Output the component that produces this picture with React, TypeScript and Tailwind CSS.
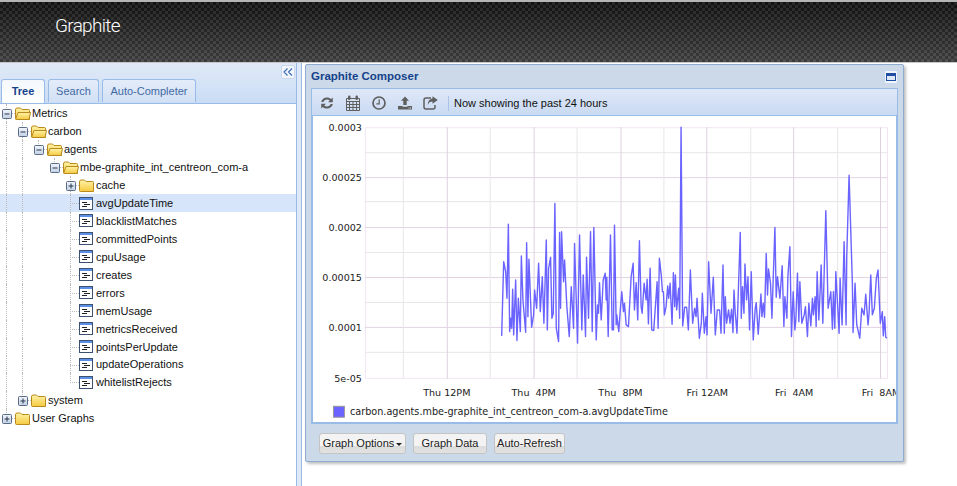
import { FC } from "react";

// traced from the chart, in page pixels: x = ox + a / 3, y = 200 + b / 3
const left = [[36,408],[42,185],[48,215],[52,295],[56,72],[60,395],[63,355],[66,385],[69,268],[72,405],[78,240],[82,422],[86,295],[92,395],[95,168],[100,300],[108,397],[111,128],[115,350],[118,178],[126,382],[132,345],[135,270],[141,325],[147,190],[152,335],[158,230],[163,370],[170,120],[173,390],[177,205],[183,172],[187,355],[191,340],[196,10],[200,385],[207,425],[210,97],[213,325],[216,95],[222,245],[225,180],[232,320],[239,410],[245,260],[252,385],[255,130],[264,430],[270,105],[277,390],[281,225],[288,410],[291,172],[297,355],[303,95],[308,395],[313,82],[320,420],[324,315],[327,340],[330,248],[335,360],[341,240],[347,220],[350,300],[352,232],[356,410],[363,105],[368,390],[372,390],[375,75],[380,375],[382,345],[388,395],[392,335],[397,275],[402,335],[405,310],[410,375],[417,380],[425,230],[431,190],[435,330],[440,248],[445,360],[450,122],[455,320],[458,340],[464,250],[470,300],[473,238],[477,372],[482,205],[487,390],[493,392],[503,245],[506,385],[510,175],[516,230],[519,275],[522,275],[525,345],[530,320],[535,258],[538,295],[542,250],[548,373],[552,218],[556,320],[558,225],[562,330],[568,265],[571,355],[575,-219],[580,378],[586,322],[592,322],[597,390]];
const right = [[3,210],[10,370],[16,325],[20,350],[23,295],[30,415],[36,370],[39,280],[45,400],[50,350],[53,405],[58,185],[65,340],[72,232],[78,405],[84,330],[91,330],[95,400],[101,195],[105,400],[108,290],[112,370],[118,330],[122,370],[127,328],[131,398],[134,270],[138,340],[143,400],[153,97],[156,355],[160,260],[164,340],[167,192],[172,300],[176,230],[181,390],[186,215],[192,420],[198,325],[201,308],[207,403],[215,282],[218,350],[222,310],[226,352],[231,160],[235,285],[238,207],[244,250],[248,355],[257,82],[261,292],[265,230],[272,295],[279,197],[284,380],[287,290],[293,355],[296,230],[302,140],[307,410],[312,275],[317,390],[320,360],[325,220],[329,365],[332,245],[338,370],[345,345],[349,320],[355,410],[359,310],[365,378],[370,295],[373,345],[378,290],[381,380],[384,215],[389,360],[392,295],[396,195],[401,370],[410,32],[417,325],[425,275],[430,388],[433,275],[437,385],[440,215],[450,400],[453,235],[459,375],[465,125],[471,375],[473,165],[480,-75],[490,250],[492,398],[498,250],[503,375],[512,415],[518,325],[525,345],[530,283],[537,375],[540,340],[545,225],[550,345],[556,325],[562,235],[567,210],[574,370],[580,335],[583,408],[587,350],[590,412],[594,415]];

const linePoints = [
  ...left.map(([a, b]) => `${(490 + a / 3).toFixed(1)},${(200 + b / 3).toFixed(1)}`),
  ...right.map(([a, b]) => `${(690 + a / 3).toFixed(1)},${(200 + b / 3).toFixed(1)}`),
].join(" ");

const verticals = [403.5, 447.5, 490.5, 534.5, 577.5, 621.5, 664.5, 707.5, 751.5, 794.5, 838.5, 881.5];
const majorVerticals = [447.5, 534.5, 621.5, 707.5, 794.5, 881.5];
const horizontals = [152.5, 177.5, 201.5, 227.5, 252.5, 277.5, 302.5, 327.5, 352.5];
const majorHorizontals = [177.5, 227.5, 277.5, 327.5];
const yLabels: [string, number][] = [["0.0003", 131], ["0.00025", 181], ["0.0002", 231], ["0.00015", 281], ["0.0001", 331], ["5e-05", 382]];
const xLabels: [string, number][] = [["Thu 12PM", 447], ["Thu  4PM", 534], ["Thu  8PM", 621], ["Fri 12AM", 708], ["Fri  4AM", 795], ["Fri  8AM", 882]];

interface TreeRow {
  label: string;
  depth: number;
  guides: number[];
  icon: "open" | "closed" | "leaf";
  selected?: boolean;
  last?: boolean;
}

const leaf = (label: string, selected?: boolean, last?: boolean): TreeRow => ({ label, depth: 4, guides: [0, 1], icon: "leaf", selected, last });

const rows: TreeRow[] = [
  { label: "Metrics", depth: 0, guides: [], icon: "open" },
  { label: "carbon", depth: 1, guides: [0], icon: "open" },
  { label: "agents", depth: 2, guides: [0, 1], icon: "open", last: true },
  { label: "mbe-graphite_int_centreon_com-a", depth: 3, guides: [0, 1], icon: "open", last: true },
  { label: "cache", depth: 4, guides: [0, 1], icon: "closed" },
  leaf("avgUpdateTime", true),
  leaf("blacklistMatches"),
  leaf("committedPoints"),
  leaf("cpuUsage"),
  leaf("creates"),
  leaf("errors"),
  leaf("memUsage"),
  leaf("metricsReceived"),
  leaf("pointsPerUpdate"),
  leaf("updateOperations"),
  leaf("whitelistRejects", false, true),
  { label: "system", depth: 1, guides: [0], icon: "closed", last: true },
  { label: "User Graphs", depth: 0, guides: [], icon: "closed", last: true },
];

const Folder: FC<{ open: boolean }> = ({ open }) => (
  <svg width="16" height="14" viewBox="0 0 16 14" className="-ml-[1px] mt-[1px] shrink-0">
    <path d="M0.5 3 Q0.5 1 2 1 H5.5 L7 2.5 H13.5 Q14.5 2.5 14.5 3.5 V12.5 H1.5 Q0.5 12.5 0.5 11.5 Z" fill="url(#folderFill)" stroke="#b98a1e" />
    {open && <path d="M0.7 12 L3 5.5 H15.5 L14 12.5 H1.5 Z" fill="url(#folderFill)" stroke="#b98a1e" />}
  </svg>
);

const LeafIcon = () => (
  <svg width="16" height="14" viewBox="0 0 16 14" className="-ml-[1px] mt-[1px] shrink-0">
    <rect x="0.5" y="0.5" width="13" height="12" fill="#fff" stroke="#3f5170" />
    <rect x="1" y="1" width="12" height="2" fill="#5c8fe6" />
    <path d="M3 5.5 H8 M5 7.5 H11 M3 9.5 H8" stroke="#222" />
  </svg>
);

const Expander: FC<{ open: boolean }> = ({ open }) => (
  <svg width="10" height="10" viewBox="0 0 10 10" className="absolute left-[2px] top-[5px]">
    <rect x="0.5" y="0.5" width="9" height="9" rx="1" fill="url(#boxFill)" stroke="#5a6b85" />
    <path d={open ? "M2.5 5 H7.5" : "M2.5 5 H7.5 M5 2.5 V7.5"} stroke="#26364f" />
  </svg>
);

const Row: FC<{ row: TreeRow }> = ({ row }) => {
  const isLeaf = row.icon === "leaf";
  return (
    <div className={`flex h-[17.94px] items-center ${row.selected ? "bg-[#d6e5fa]" : ""}`}>
      {Array.from({ length: row.depth }).map((_, i) => (
        <div key={i} className="h-full w-4 shrink-0 pl-[6px]">
          {row.guides.includes(i) && <div className="h-full border-l border-dotted border-[#bbb]" />}
        </div>
      ))}
      <div className="relative h-full w-4 shrink-0 pl-[6px]">
        <div className={`border-l border-dotted border-[#bbb] ${row.last ? "h-[10px]" : "h-full"}`} />
        <div className="absolute left-[6px] top-[9px] w-[9px] border-t border-dotted border-[#bbb]" />
        {!isLeaf && <Expander open={row.icon === "open"} />}
      </div>
      {isLeaf ? <LeafIcon /> : <Folder open={row.icon === "open"} />}
      <span className="ml-[1px] mt-[1px] whitespace-nowrap text-[11px] leading-none text-[#111]">{row.label}</span>
    </div>
  );
};

const Tab: FC<{ label: string; active?: boolean; width: string }> = ({ label, active, width }) => (
  <div
    className={`flex items-center justify-center rounded-t-[3px] border border-[#99bbe8] text-[11px] ${width} ${
      active
        ? "h-[24px] border-b-0 bg-[linear-gradient(to_bottom,#f4f8fd,#fff)] font-bold text-[#15428b]"
        : "h-[23px] border-b-0 bg-[linear-gradient(to_bottom,#e3ecf9,#d3e1f5)] text-[#416aa3]"
    }`}
  >
    {label}
  </div>
);

const RefreshIcon = () => (
  <svg width="14" height="14" viewBox="0 0 14 14" fill="#5f5f5f">
    <path d="M1.2 6 C1.8 3.2 4 1.4 7 1.4 C8.7 1.4 10.1 2 11.2 3.1 L12.8 1.5 V6.2 H8.1 L9.7 4.6 C8.9 3.9 8 3.5 7 3.5 C5.3 3.5 3.9 4.5 3.4 6 Z" />
    <path d="M12.8 8 C12.2 10.8 10 12.6 7 12.6 C5.3 12.6 3.9 12 2.8 10.9 L1.2 12.5 V7.8 H5.9 L4.3 9.4 C5.1 10.1 6 10.5 7 10.5 C8.7 10.5 10.1 9.5 10.6 8 Z" />
  </svg>
);

const CalendarIcon = () => (
  <svg width="16" height="16" viewBox="0 0 16 16" fill="none" stroke="#5f5f5f">
    <path d="M1.5 3.5 H14.5 V15.5 H1.5 Z M1.5 6.5 H14.5 M1.5 9.5 H14.5 M1.5 12.5 H14.5 M4.5 6.5 V15.5 M8 6.5 V15.5 M11.5 6.5 V15.5" />
    <rect x="3" y="0.5" width="2.5" height="4.5" rx="1.2" fill="#5f5f5f" stroke="none" />
    <rect x="10.5" y="0.5" width="2.5" height="4.5" rx="1.2" fill="#5f5f5f" stroke="none" />
  </svg>
);

const ClockIcon = () => (
  <svg width="14" height="14" viewBox="0 0 14 14" fill="none" stroke="#5f5f5f">
    <circle cx="7" cy="7" r="6" strokeWidth="1.7" />
    <path d="M7.2 3.2 V7.8 H4.4" strokeWidth="1.2" />
  </svg>
);

const UploadIcon = () => (
  <svg width="14" height="14" viewBox="0 0 14 14" fill="#5f5f5f">
    <path d="M7 0.5 L11 4.8 H8.7 V9 H5.3 V4.8 H3 Z" />
    <path d="M0 10 H4.5 V10.8 H9.5 V10 H14 V13.5 H0 Z" />
    <rect x="10.5" y="11.5" width="1" height="1" fill="#ddd" />
    <rect x="12" y="11.5" width="1" height="1" fill="#ddd" />
  </svg>
);

const ShareIcon = () => (
  <svg width="15" height="14" viewBox="0 0 15 14">
    <path d="M8 2 H3 Q1 2 1 4 V11 Q1 13 3 13 H10 Q12 13 12 11 V9" fill="none" stroke="#5f5f5f" strokeWidth="1.5" />
    <path d="M9.5 0.2 L14.8 4 L9.5 7.8 V5.5 C7.2 5.5 5.6 6.6 4.8 9 C4.8 5.5 6.4 2.8 9.5 2.5 Z" fill="#5f5f5f" />
  </svg>
);

const ComposerButton: FC<{ label: string; width: string; caret?: boolean }> = ({ label, width, caret }) => (
  <button className={`flex h-[21px] items-center justify-center gap-[2px] rounded-[3px] border border-[#c4c4c4] bg-[linear-gradient(to_bottom,#f3f3f3_0,#f3f3f3_62%,#dcdcdc_62%,#e2e2e2_100%)] text-[11px] text-[#222] ${width}`}>
    {label}
    {caret && <span className="mt-[1px] h-0 w-0 border-x-[3px] border-t-[3px] border-x-transparent border-t-[#222]" />}
  </button>
);

const Chart = () => (
  <svg viewBox="313 116 584 306" className="block h-[306px] w-[584px]" fontFamily="'DejaVu Sans', sans-serif" fontSize="9.6" fill="#222">
    <rect x="365.5" y="127.5" width="523" height="251" fill="none" stroke="#f3e6f3" />
    {horizontals.map((y) => (
      <line key={y} x1="365" x2="889" y1={y} y2={y} stroke={majorHorizontals.includes(y) ? "#e3d3e3" : "#e9e6e9"} />
    ))}
    {verticals.map((x) => (
      <line key={x} x1={x} x2={x} y1="127" y2="379" stroke={majorVerticals.includes(x) ? "#e0cfe0" : "#e9e6e9"} />
    ))}
    <polyline points={linePoints} fill="none" stroke="#6a63ff" strokeWidth="1.4" strokeLinejoin="round" />
    {yLabels.map(([t, y]) => (
      <text key={t} x="362" y={y} textAnchor="end">{t}</text>
    ))}
    {xLabels.map(([t, x]) => (
      <text key={t} x={x} y="396" textAnchor="middle" xmlSpace="preserve">{t}</text>
    ))}
    <rect x="333.5" y="406.5" width="11" height="11" fill="#6a63ff" stroke="#999" />
    <text x="350" y="415" fontSize="9.7">carbon.agents.mbe-graphite_int_centreon_com-a.avgUpdateTime</text>
  </svg>
);

const App = () => {
  return (
    <div className="flex h-[486px] w-[957px] flex-col overflow-hidden bg-white font-['Liberation_Sans',Arial,sans-serif]">
      <svg className="absolute h-0 w-0">
        <defs>
          <linearGradient id="folderFill" x1="0" y1="0" x2="0" y2="1">
            <stop offset="0" stopColor="#fff3a8" />
            <stop offset="1" stopColor="#f5c93f" />
          </linearGradient>
          <linearGradient id="boxFill" x1="0" y1="0" x2="0" y2="1">
            <stop offset="0" stopColor="#f2f6fc" />
            <stop offset="1" stopColor="#c3d0e4" />
          </linearGradient>
        </defs>
      </svg>

      <header className="flex h-[63px] shrink-0 items-start border-t-2 border-b border-t-[#b5b5b5] border-b-[#c8c8c8] bg-[image:linear-gradient(to_bottom,rgba(0,0,0,0.2),rgba(255,255,255,0.16)),repeating-conic-gradient(#161616_0_25%,#303030_0_50%)] bg-[length:100%_100%,6px_6px] pl-[55px] pt-[12px]">
        <span className="font-['Roboto',sans-serif] text-[19px] font-light leading-[24px] tracking-[-0.7px] text-white">Graphite</span>
      </header>

      <div className="flex min-h-0 flex-1">
        <aside className="flex w-[297px] shrink-0 flex-col border-r border-[#99bbe8]">
          <div className="flex h-[41px] shrink-0 flex-col border-b border-[#99bbe8] bg-[linear-gradient(to_bottom,#dfe8f6,#d8e5f7_40%,#c9dcf5)]">
            <div className="flex h-[16px] justify-end pr-[1px] pt-[2px]">
              <div className="flex h-[14px] w-[14px] items-center justify-center rounded-[2px] border border-[#c7d8f0] bg-[#f2f6fc]">
                <svg width="10" height="8" viewBox="0 0 10 8" fill="none" stroke="#3f6fb5" strokeWidth="1.2">
                  <path d="M4.5 0.5 L1 4 L4.5 7.5 M9 0.5 L5.5 4 L9 7.5" />
                </svg>
              </div>
            </div>
            <div className="flex items-start gap-[3px] pl-[1px]">
              <Tab label="Tree" active width="w-[44px]" />
              <Tab label="Search" width="w-[51px]" />
              <Tab label="Auto-Completer" width="w-[94px]" />
            </div>
          </div>
          <div className="pt-[0.4px]">
            {rows.map((row) => (
              <Row key={row.label} row={row} />
            ))}
          </div>
        </aside>

        <div className="w-[5px] shrink-0 border-r border-[#99bbe8] bg-[#dfe8f6]" />

        <main className="min-w-0 flex-1 pl-[3px] pt-[1px]">
          <section className="flex h-[398px] w-[599px] flex-col rounded-[2px] border border-[#8fabd0] bg-[#ccd9e8] px-[5px] shadow-[2px_2px_3px_rgba(0,0,0,0.25)]">
            <div className="flex h-[23px] shrink-0 items-center justify-between">
              <h2 className="text-[11.5px] font-bold text-[#15428b]">Graphite Composer</h2>
              <div className="flex h-[14px] w-[14px] items-center justify-center rounded-[2px] border border-[#c7d8f0] bg-[#f2f6fc]">
                <div className="h-[8px] w-[10px] border border-t-[3px] border-[#1f4ea3] bg-[#dfe8f6]" />
              </div>
            </div>
            <div className="flex h-[28px] shrink-0 items-center border border-[#99bbe8] bg-[linear-gradient(to_bottom,#dfe8f8,#c9daf2)] pl-[8px] pt-[2px]">
              <div className="flex w-[125px] items-center">
                <div className="w-[25px]"><RefreshIcon /></div>
                <div className="w-[27px]"><CalendarIcon /></div>
                <div className="w-[26px]"><ClockIcon /></div>
                <div className="w-[25px]"><UploadIcon /></div>
                <div className="w-[22px]"><ShareIcon /></div>
              </div>
              <div className="ml-[3px] h-[15px] border-l border-[#a9c4e8]" />
              <span className="ml-[5px] whitespace-nowrap text-[11px] text-[#111]">Now showing the past 24 hours</span>
            </div>
            <div className="flex h-[308px] shrink-0 justify-center border-x-2 border-b-2 border-[#99bbe8] bg-white">
              <Chart />
            </div>
            <div className="flex items-center gap-[7px] pl-[8px] pt-[9px]">
              <ComposerButton label="Graph Options" caret width="w-[87px]" />
              <ComposerButton label="Graph Data" width="w-[74px]" />
              <ComposerButton label="Auto-Refresh" width="w-[71px]" />
            </div>
          </section>
        </main>
      </div>
    </div>
  );
};

export default App;
